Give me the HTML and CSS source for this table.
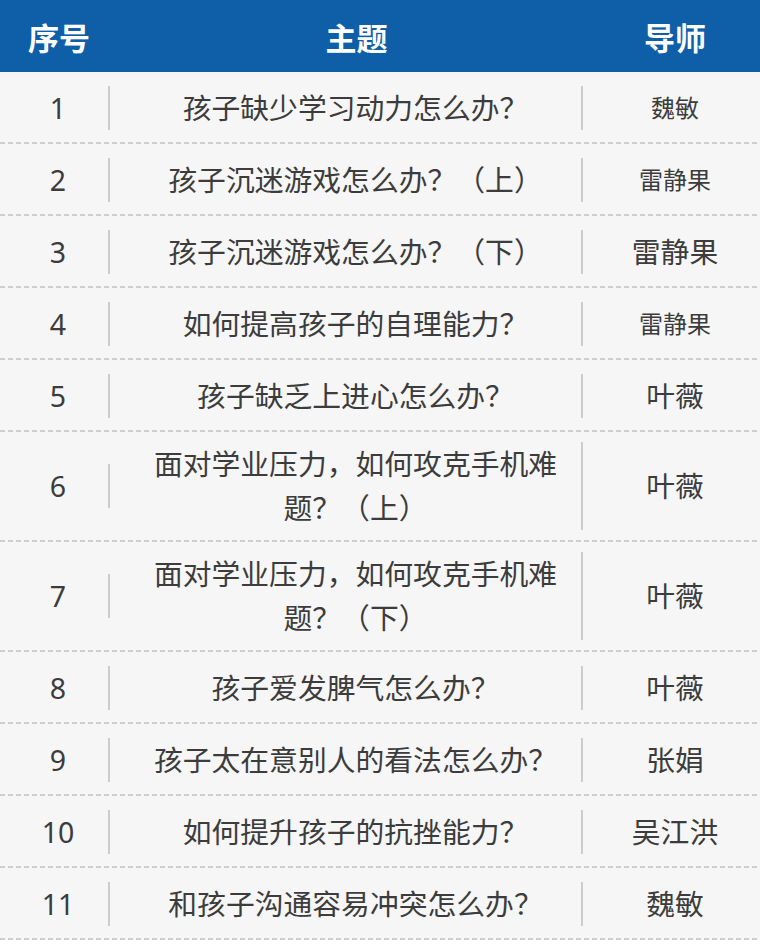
FILE: index.html
```html
<!DOCTYPE html>
<html lang="zh-CN">
<head>
<meta charset="utf-8">
<link rel="stylesheet" href="styles.css">
</head>
<body>
<div class="table">
  <div class="head">
    <div class="h-no">序号</div>
    <div class="h-topic">主题</div>
    <div class="h-teacher">导师</div>
  </div>
  <div class="row"><div class="c-no"><span>1</span></div><div class="c-topic"><span>孩子缺少学习动力怎么办？</span></div><div class="c-teacher small">魏敏</div></div>
  <div class="row"><div class="c-no"><span>2</span></div><div class="c-topic"><span>孩子沉迷游戏怎么办？（上）</span></div><div class="c-teacher small">雷静果</div></div>
  <div class="row"><div class="c-no"><span>3</span></div><div class="c-topic"><span>孩子沉迷游戏怎么办？（下）</span></div><div class="c-teacher">雷静果</div></div>
  <div class="row"><div class="c-no"><span>4</span></div><div class="c-topic"><span>如何提高孩子的自理能力？</span></div><div class="c-teacher small">雷静果</div></div>
  <div class="row"><div class="c-no"><span>5</span></div><div class="c-topic"><span>孩子缺乏上进心怎么办？</span></div><div class="c-teacher">叶薇</div></div>
  <div class="row tall"><div class="c-no"><span>6</span></div><div class="c-topic"><span>面对学业压力，如何攻克手机难题？（上）</span></div><div class="c-teacher">叶薇</div></div>
  <div class="row tall"><div class="c-no"><span>7</span></div><div class="c-topic"><span>面对学业压力，如何攻克手机难题？（下）</span></div><div class="c-teacher">叶薇</div></div>
  <div class="row"><div class="c-no"><span>8</span></div><div class="c-topic"><span>孩子爱发脾气怎么办？</span></div><div class="c-teacher">叶薇</div></div>
  <div class="row"><div class="c-no"><span>9</span></div><div class="c-topic"><span>孩子太在意别人的看法怎么办？</span></div><div class="c-teacher">张娟</div></div>
  <div class="row"><div class="c-no"><span>10</span></div><div class="c-topic"><span>如何提升孩子的抗挫能力？</span></div><div class="c-teacher">吴江洪</div></div>
  <div class="row"><div class="c-no"><span>11</span></div><div class="c-topic"><span>和孩子沟通容易冲突怎么办？</span></div><div class="c-teacher">魏敏</div></div>
</div>
</body>
</html>
```
FILE: styles.css
```css
* { box-sizing: border-box; }
html, body {
  margin: 0;
  padding: 0;
  background: #f6f6f6;
}
body {
  font-family: "Noto Sans", "Noto Sans CJK SC", sans-serif;
  color: #3c3c3c;
  width: 760px;
}
.table {
  width: 760px;
}
.head {
  display: flex;
  align-items: center;
  height: 72px;
  background: #0f5ea8;
  color: #ffffff;
  font-weight: 700;
  font-size: 31px;
}
.h-no { width: 110px; padding-left: 8px; text-align: center; }
.h-topic { width: 473px; padding-left: 20px; text-align: center; }
.h-teacher { flex: 1; padding-left: 7px; text-align: center; }

.row {
  display: flex;
  align-items: center;
  min-height: 72px;
  padding: 11px 0 11px;
  background-image: repeating-linear-gradient(to right, #cfcfcf 0 5px, transparent 5px 8px);
  background-size: 100% 2px;
  background-position: 0 100%;
  background-repeat: no-repeat;
  font-size: 28.8px;
  line-height: 44px;
}
.row.tall { padding: 10px 0 12px; }
.c-no {
  width: 110px;
  border-right: 2px solid #cccccc;
  padding-left: 8px;
  text-align: center;
  font-size: 28.5px;
}
.c-topic {
  width: 473px;
  border-right: 2px solid #cccccc;
  padding: 0 20px 0 40px;
  text-align: center;
}
.c-teacher {
  flex: 1;
  padding-left: 7px;
  text-align: center;
}
.c-teacher.small { font-size: 24px; }
```
